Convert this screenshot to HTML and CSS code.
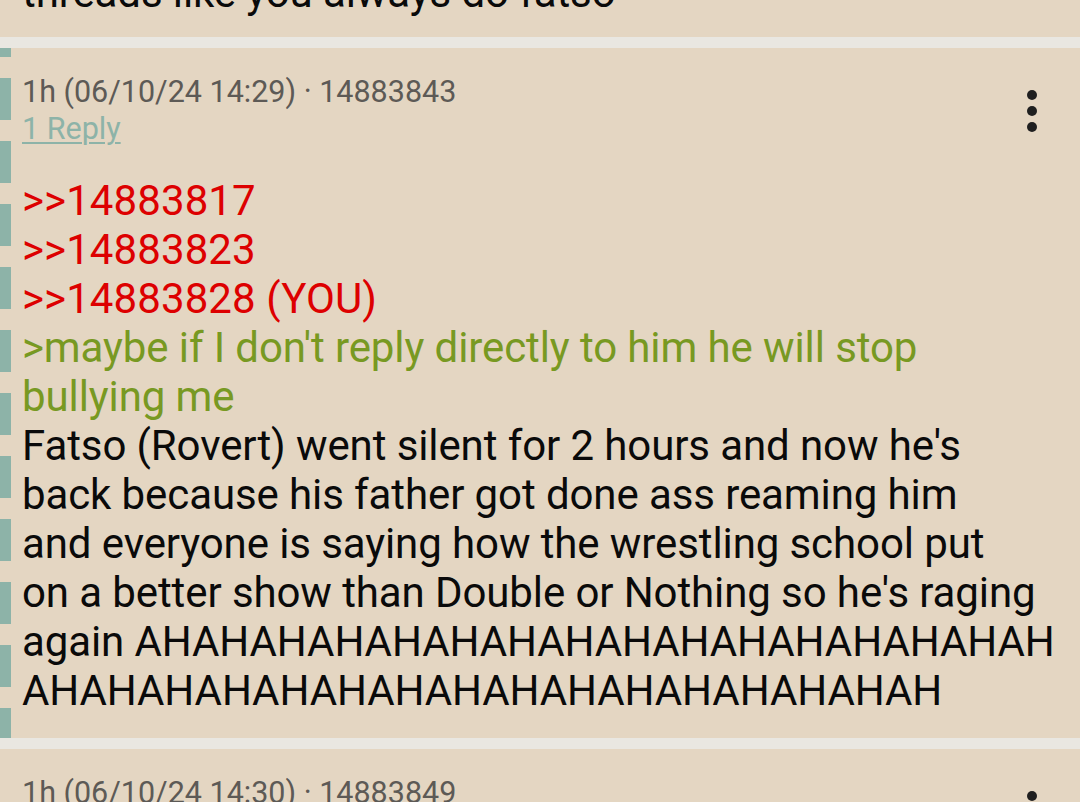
FILE: index.html
```html
<!DOCTYPE html>
<html lang="en">
<head>
<meta charset="utf-8">
<title>Thread</title>
<link rel="stylesheet" href="styles.css">
</head>
<body>
<main class="feed">
  <article class="post">
    <p class="comment">threads like you always do fatso</p>
  </article>

  <article class="post post-you">
    <header class="post-header">
      <div class="meta">1h (06/10/24 14:29) · 14883843</div>
      <a class="replies" href="#">1 Reply</a>
      <button class="menu" aria-label="More">
        <svg width="10" height="42" viewBox="0 0 10 42"><circle cx="5" cy="5" r="5"/><circle cx="5" cy="21" r="5"/><circle cx="5" cy="37" r="5"/></svg>
      </button>
    </header>
    <p class="comment"><span class="quote">&gt;&gt;14883817</span><br><span class="quote">&gt;&gt;14883823</span><br><span class="quote">&gt;&gt;14883828 (YOU)</span><br><span class="green">&gt;maybe if I don't reply directly to him he will stop<br>bullying me</span><br>Fatso (Rovert) went silent for 2 hours and now he's<br>back because his father got done ass reaming him<br>and everyone is saying how the wrestling school put<br>on a better show than Double or Nothing so he's raging<br>again AHAHAHAHAHAHAHAHAHAHAHAHAHAHAHAH<br>AHAHAHAHAHAHAHAHAHAHAHAHAHAHAHAH</p>
  </article>

  <article class="post">
    <header class="post-header">
      <div class="meta">1h (06/10/24 14:30) · 14883849</div>
      <button class="menu" aria-label="More">
        <svg width="10" height="42" viewBox="0 0 10 42"><circle cx="5" cy="5" r="5"/><circle cx="5" cy="21" r="5"/><circle cx="5" cy="37" r="5"/></svg>
      </button>
    </header>
    <p class="comment">&nbsp;</p>
  </article>
</main>
</body>
</html>
```

FILE: styles.css
```css
html, body {
  margin: 0;
  padding: 0;
  height: 100%;
  overflow: hidden;
  background: #e9e7e1;
}

body {
  font-family: Roboto, "Noto Sans", sans-serif;
}

.feed {
  display: flex;
  flex-direction: column;
  gap: 11px;
  margin-top: -32px;
}

.post {
  position: relative;
  background-color: #e4d6c2;
  padding: 0 22px 20px 22px;
}

.post-you {
  padding: 25px 22px 23px 22px;
  background-image: linear-gradient(#8db3a8 0 42px, transparent 42px);
  background-size: 11px 63px;
  background-repeat: repeat-y;
  background-position: 0 30px;
}

.post-you + .post {
  padding-top: 25px;
}

.post-header {
  display: flex;
  flex-direction: column;
  align-items: flex-start;
  font-size: 30.5px;
  line-height: 37px;
}

.meta {
  color: #5d5a56;
}

.replies {
  color: #8db3a8;
  text-decoration: underline;
  text-decoration-thickness: 2px;
  text-underline-offset: 3px;
}

.menu {
  position: absolute;
  top: 42px;
  right: 43px;
  padding: 0;
  border: 0;
  background: none;
  line-height: 0;
}

.menu svg {
  display: block;
  fill: #1f1f1f;
}

.comment {
  margin: 0;
  font-size: 42px;
  line-height: 49px;
  letter-spacing: -0.1px;
  color: #0a0a0a;
  white-space: nowrap;
}

.post-you .comment {
  margin-top: 29px;
}

.quote {
  color: #dd0000;
  letter-spacing: 0.1px;
}

.green {
  color: #789922;
}
```
